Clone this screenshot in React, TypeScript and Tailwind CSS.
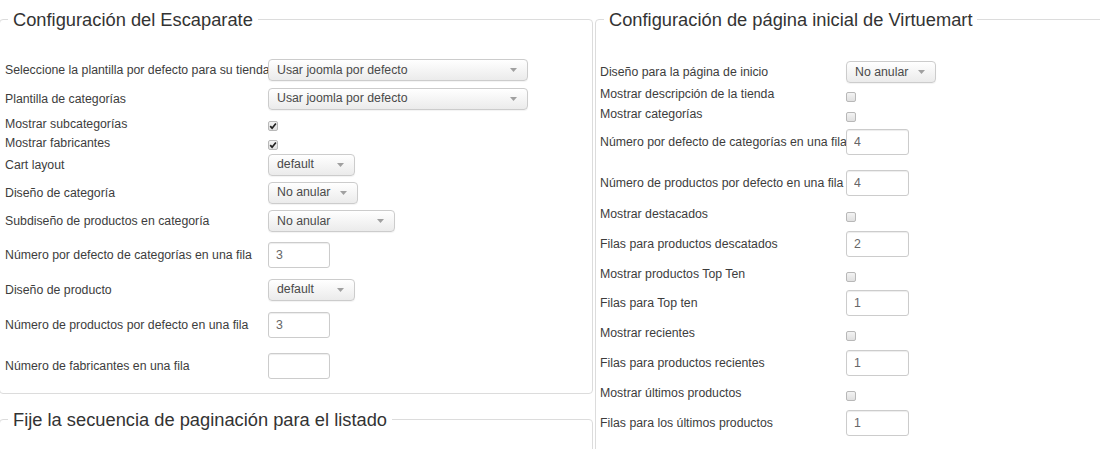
import React from 'react';

type Control =
  | { kind: 'select'; value: string; w: string }
  | { kind: 'check'; checked: boolean }
  | { kind: 'input'; value: string; w: string };

type Row = { label: string; h: string; control: Control };

const leftRows: Row[] = [
  { label: 'Seleccione la plantilla por defecto para su tienda', h: 'h-[24px]', control: { kind: 'select', value: 'Usar joomla por defecto', w: 'w-[260px]' } },
  { label: 'Plantilla de categorías', h: 'h-[33px]', control: { kind: 'select', value: 'Usar joomla por defecto', w: 'w-[260px]' } },
  { label: 'Mostrar subcategorías', h: 'h-[17px]', control: { kind: 'check', checked: true } },
  { label: 'Mostrar fabricantes', h: 'h-[21px]', control: { kind: 'check', checked: true } },
  { label: 'Cart layout', h: 'h-[23px]', control: { kind: 'select', value: 'default', w: 'w-[87px]' } },
  { label: 'Diseño de categoría', h: 'h-[33px]', control: { kind: 'select', value: 'No anular', w: 'w-[90px]' } },
  { label: 'Subdiseño de productos en categoría', h: 'h-[24px]', control: { kind: 'select', value: 'No anular', w: 'w-[127px]' } },
  { label: 'Número por defecto de categorías en una fila', h: 'h-[44px]', control: { kind: 'input', value: '3', w: 'w-[62px]' } },
  { label: 'Diseño de producto', h: 'h-[25px]', control: { kind: 'select', value: 'default', w: 'w-[87px]' } },
  { label: 'Número de productos por defecto en una fila', h: 'h-[46px]', control: { kind: 'input', value: '3', w: 'w-[62px]' } },
  { label: 'Número de fabricantes en una fila', h: 'h-[36px]', control: { kind: 'input', value: '', w: 'w-[62px]' } },
];

const rightRows: Row[] = [
  { label: 'Diseño para la página de inicio', h: 'h-[22px]', control: { kind: 'select', value: 'No anular', w: 'w-[90px]' } },
  { label: 'Mostrar descripción de la tienda', h: 'h-[22px]', control: { kind: 'check', checked: false } },
  { label: 'Mostrar categorías', h: 'h-[18px]', control: { kind: 'check', checked: false } },
  { label: 'Número por defecto de categorías en una fila', h: 'h-[38px]', control: { kind: 'input', value: '4', w: 'w-[63px]' } },
  { label: 'Número de productos por defecto en una fila', h: 'h-[44px]', control: { kind: 'input', value: '4', w: 'w-[63px]' } },
  { label: 'Mostrar destacados', h: 'h-[18px]', control: { kind: 'check', checked: false } },
  { label: 'Filas para productos descatados', h: 'h-[42px]', control: { kind: 'input', value: '2', w: 'w-[63px]' } },
  { label: 'Mostrar productos Top Ten', h: 'h-[18px]', control: { kind: 'check', checked: false } },
  { label: 'Filas para Top ten', h: 'h-[40px]', control: { kind: 'input', value: '1', w: 'w-[63px]' } },
  { label: 'Mostrar recientes', h: 'h-[20px]', control: { kind: 'check', checked: false } },
  { label: 'Filas para productos recientes', h: 'h-[40px]', control: { kind: 'input', value: '1', w: 'w-[63px]' } },
  { label: 'Mostrar últimos productos', h: 'h-[20px]', control: { kind: 'check', checked: false } },
  { label: 'Filas para los últimos productos', h: 'h-[40px]', control: { kind: 'input', value: '1', w: 'w-[63px]' } },
];

function Field({ control }: { control: Control }) {
  if (control.kind === 'select') {
    return (
      <div className={`flex h-[22px] items-center justify-between rounded-[4px] border border-[#cccccc] bg-linear-to-b from-white to-[#ebebeb] pl-[8px] pr-[10px] text-[#4a4a4a] shadow-[0_1px_1px_rgba(0,0,0,0.05)] ${control.w}`}>
        <span className="whitespace-nowrap">{control.value}</span>
        <svg width="7" height="4" viewBox="0 0 7 4">
          <path d="M0 0h7L3.5 4z" fill="#a0a0a0" />
        </svg>
      </div>
    );
  }
  if (control.kind === 'check') {
    return (
      <span className="mt-[5px] flex h-[10px] w-[10px] items-center justify-center rounded-[2px] border border-[#b8b8b8] bg-linear-to-b from-[#f3f3f3] to-[#e0e0e0]">
        {control.checked && (
          <svg width="8" height="8" viewBox="0 0 8 8">
            <path d="M1.2 4.2 3.1 6.2 6.9 1.5" fill="none" stroke="#222" strokeWidth="1.7" />
          </svg>
        )}
      </span>
    );
  }
  return (
    <input
      readOnly
      defaultValue={control.value}
      className={`h-[26px] rounded-[3px] border border-[#cccccc] bg-white pl-[7px] text-[#666] shadow-[inset_0_1px_1px_rgba(0,0,0,0.075)] outline-none ${control.w}`}
    />
  );
}

function Rows({ rows, labelW }: { rows: Row[]; labelW: string }) {
  return (
    <div>
      {rows.map((r) => (
        <div key={r.label} className={`flex items-center ${r.h}`}>
          <div className={`shrink-0 whitespace-nowrap leading-[18px] ${labelW}`}>{r.label}</div>
          <Field control={r.control} />
        </div>
      ))}
    </div>
  );
}

export default function App() {
  return (
    <div className="h-[449px] w-[1100px] overflow-hidden bg-white pt-[9px] font-['Liberation_Sans',Arial,sans-serif] text-[12.3px] text-[#3d3d3d]">
      <div className="-ml-[1px] flex gap-[2px]">
        <div className="w-[594px] shrink-0">
          <fieldset className="rounded-[4px] border border-[#dcdcdc]">
            <legend className="ml-[8px] px-[5px] text-[18.3px] leading-[21px] text-[#333]">Configuración del Escaparate</legend>
            <div className="pb-[9px] pl-[5px] pt-[28px]">
              <Rows rows={leftRows} labelW="w-[263px]" />
            </div>
          </fieldset>
          <fieldset className="mt-[15px] rounded-[4px] border border-[#dcdcdc]">
            <legend className="ml-[8px] px-[5px] text-[18.3px] leading-[21px] text-[#333]">Fije la secuencia de paginación para el listado</legend>
            <div className="h-[60px]" />
          </fieldset>
        </div>
        <fieldset className="w-[520px] shrink-0 rounded-[4px] border border-[#dcdcdc]">
          <legend className="ml-[8px] px-[5px] text-[18.3px] leading-[21px] text-[#333]">Configuración de página inicial de Virtuemart</legend>
          <div className="pb-[20px] pl-[4px] pt-[31px]">
            <Rows rows={rightRows} labelW="w-[246px]" />
          </div>
        </fieldset>
      </div>
    </div>
  );
}
